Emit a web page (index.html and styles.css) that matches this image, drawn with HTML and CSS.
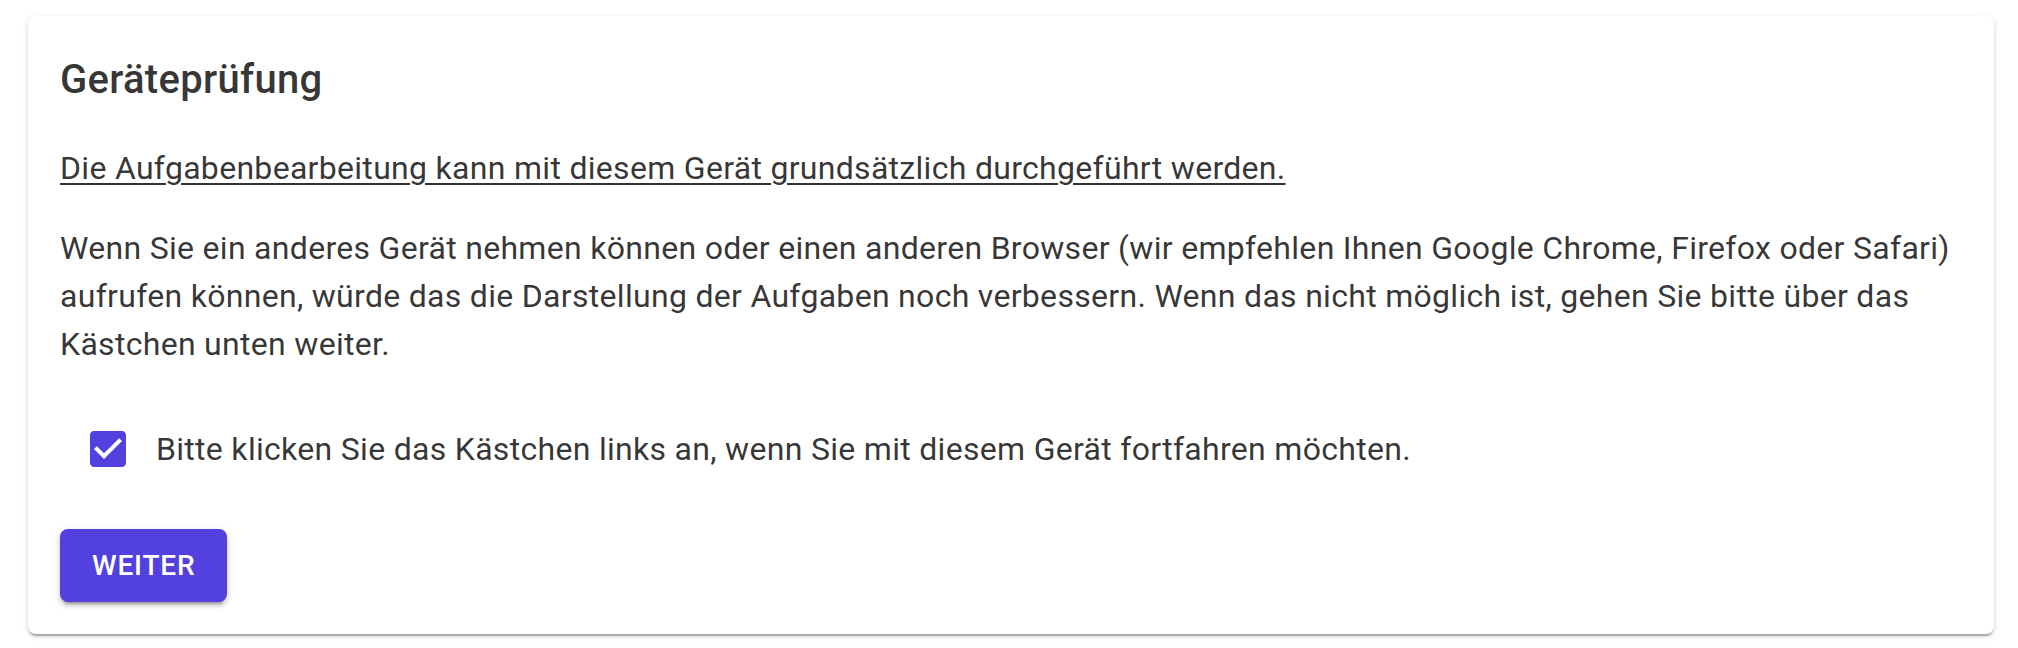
FILE: index.html
```html
<!DOCTYPE html>
<html lang="de">
<head>
<meta charset="utf-8">
<title>Geräteprüfung</title>
<link rel="stylesheet" href="styles.css">
</head>
<body>
<div class="card">
  <h2 class="title">Geräteprüfung</h2>
  <p class="lead">Die Aufgabenbearbeitung kann mit diesem Gerät grundsätzlich durchgeführt werden.</p>
  <p class="text">Wenn Sie ein anderes Gerät nehmen können oder einen anderen Browser (wir empfehlen Ihnen Google Chrome, Firefox oder Safari) aufrufen können, würde das die Darstellung der Aufgaben noch verbessern. Wenn das nicht möglich ist, gehen Sie bitte über das Kästchen unten weiter.</p>
  <label class="check-row">
    <span class="check">
      <svg viewBox="0 0 24 24" width="48" height="48"><path fill="currentColor" d="M19 3H5c-1.11 0-2 .9-2 2v14c0 1.1.89 2 2 2h14c1.11 0 2-.9 2-2V5c0-1.1-.89-2-2-2zm-9 14l-5-5 1.41-1.41L10 14.17l7.59-7.59L19 8l-9 9z"/></svg>
    </span>
    <span class="check-label">Bitte klicken Sie das Kästchen links an, wenn Sie mit diesem Gerät fortfahren möchten.</span>
  </label>
  <button class="btn" type="button">Weiter</button>
</div>
</body>
</html>
```
FILE: styles.css
```css
html, body {
  margin: 0;
  padding: 0;
  background: #ffffff;
}
body {
  padding: 16px 24px 15px 28px;
  font-family: Roboto, "Liberation Sans", sans-serif;
  color: rgba(0, 0, 0, 0.8);
}
.card {
  background: #ffffff;
  border-radius: 8px;
  padding: 32px;
  box-shadow: 0 4px 2px -2px rgba(0, 0, 0, 0.2), 0 2px 2px 0 rgba(0, 0, 0, 0.14), 0 2px 6px 0 rgba(0, 0, 0, 0.12);
}
.title {
  margin: 0 0 32px;
  font-size: 40px;
  line-height: 64px;
  font-weight: 500;
  letter-spacing: 0.0075em;
}
.lead {
  margin: 0 0 32px;
  font-size: 32px;
  line-height: 48px;
  letter-spacing: 0.00938em;
  text-decoration: underline;
  text-decoration-thickness: 2px;
  text-underline-offset: 4px;
}
.text {
  margin: 0;
  font-size: 32px;
  line-height: 48px;
  letter-spacing: 0.00938em;
}
.check-row {
  display: flex;
  align-items: center;
  height: 84px;
  margin-top: 39px;
  padding-left: 6px;
}
.check {
  display: flex;
  padding: 18px;
  color: #5240df;
}
.check svg {
  display: block;
}
.check-label {
  margin-left: 6px;
  font-size: 32px;
  line-height: 48px;
  letter-spacing: 0.00938em;
}
.btn {
  display: block;
  margin-top: 38px;
  height: 73px;
  padding: 0 32px;
  border: none;
  border-radius: 8px;
  background: #5240df;
  color: #ffffff;
  font-family: Roboto, "Liberation Sans", sans-serif;
  font-size: 28px;
  font-weight: 500;
  letter-spacing: 0.8px;
  text-transform: uppercase;
  box-shadow: 0 6px 2px -4px rgba(0, 0, 0, 0.2), 0 4px 4px 0 rgba(0, 0, 0, 0.14), 0 2px 10px 0 rgba(0, 0, 0, 0.12);
}
```
